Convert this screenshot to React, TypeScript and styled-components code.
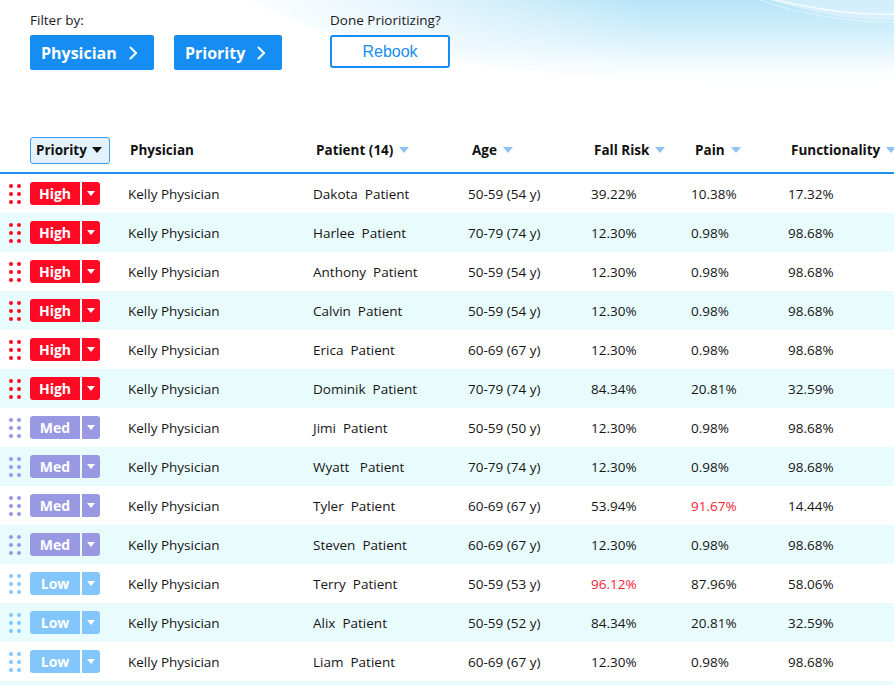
import React from "react";
import styled, { createGlobalStyle, css } from "styled-components";

const Global = createGlobalStyle`
  html, body { margin: 0; padding: 0; background: #fff; }
  body { font-family: "Open Sans", "Noto Sans", sans-serif; color: #111; }
  #root { width: 894px; height: 685px; overflow: hidden; }
`;

const Page = styled.div`
  position: relative;
  width: 894px;
  height: 685px;
  overflow: hidden;
  background: #fff;
`;

const Backdrop = styled.svg`
  position: absolute;
  left: 0;
  top: 0;
  width: 894px;
  height: 130px;
  pointer-events: none;
`;

const TopBar = styled.div`
  position: relative;
  height: 128px;
  box-sizing: border-box;
  padding: 11px 0 0 30px;
  display: flex;
  gap: 48px;
`;

const Group = styled.div`
  display: flex;
  flex-direction: column;
  gap: 6px;
`;

const Label = styled.div`
  font-size: 13.5px;
  line-height: 18px;
  color: #1a1a1a;
`;

const Buttons = styled.div`
  display: flex;
  gap: 20px;
`;

const FilterButton = styled.button<{ $w: number }>`
  width: ${(p) => p.$w}px;
  height: 35px;
  box-sizing: border-box;
  border: none;
  border-radius: 2px;
  background: #168df2;
  color: #fff;
  font-family: "Open Sans", sans-serif;
  font-weight: 700;
  font-size: 16px;
  display: flex;
  align-items: center;
  gap: 12px;
  padding: 0 0 0 11px;
  cursor: pointer;
`;

const RebookButton = styled.button`
  width: 120px;
  height: 33px;
  box-sizing: border-box;
  border: 2px solid #168df2;
  border-radius: 3px;
  background: #fff;
  color: #168df2;
  font-family: "Liberation Sans", Arial, sans-serif;
  font-size: 16px;
  padding: 0;
`;

const Chevron = () => (
  <svg width="9" height="14" viewBox="0 0 9 14">
    <path d="M1.5 1.5 L7 7 L1.5 12.5" fill="none" stroke="#fff" strokeWidth="2" strokeLinecap="round" />
  </svg>
);

const COLS = "30px 98px 185px 155px 123px 100px 97px 1fr";

const HeaderRow = styled.div`
  display: grid;
  grid-template-columns: ${COLS};
  height: 44px;
  align-items: center;
  border-bottom: 2px solid #1f8ff0;
`;

const HeadCell = styled.div<{ $pl?: number }>`
  font-weight: 700;
  font-size: 13.5px;
  color: #111;
  padding-left: ${(p) => p.$pl ?? 3}px;
  display: flex;
  align-items: center;
  gap: 6px;
  white-space: nowrap;
`;

const SortBox = styled.div`
  width: 80px;
  height: 27px;
  box-sizing: border-box;
  border: 1px solid #3a9af0;
  border-radius: 3px;
  background: #e4f2fc;
  display: flex;
  align-items: center;
  padding-left: 5px;
  gap: 5px;
  font-weight: 700;
  font-size: 13.5px;
`;

const Tri = ({ color }: { color: string }) => (
  <svg width="10" height="6" viewBox="0 0 10 6">
    <path d="M0 0 H10 L5 6 Z" fill={color} />
  </svg>
);

const Row = styled.div<{ $alt: boolean }>`
  display: grid;
  grid-template-columns: ${COLS};
  height: 39px;
  align-items: center;
  background: ${(p) => (p.$alt ? "#e9fcfd" : "#fff")};
`;

const Cell = styled.div<{ $red?: boolean }>`
  font-size: 13.5px;
  color: ${(p) => (p.$red ? "#ff1a33" : "#151515")};
  white-space: pre;
`;

type Level = "High" | "Med" | "Low";
const levelColor: Record<Level, string> = {
  High: "#ff0a25",
  Med: "#9999e3",
  Low: "#82c6fb",
};

const Handle = styled.div<{ $c: string }>`
  display: grid;
  grid-template-columns: 4px 4px;
  gap: 4px 4px;
  padding-left: 9px;
  span {
    width: 4px;
    height: 4px;
    border-radius: 50%;
    background: ${(p) => p.$c};
  }
`;

const Badge = styled.div`
  display: flex;
  gap: 2px;
  height: 23px;
`;

const badgeBase = css<{ $c: string }>`
  background: ${(p) => p.$c};
  color: #fff;
  display: flex;
  align-items: center;
  justify-content: center;
`;

const BadgeLabel = styled.div<{ $c: string }>`
  ${badgeBase};
  width: 50px;
  border-radius: 3px 0 0 3px;
  font-weight: 700;
  font-size: 14px;
`;

const BadgeArrow = styled.div<{ $c: string }>`
  ${badgeBase};
  width: 18px;
  border-radius: 0 3px 3px 0;
`;

type Patient = {
  level: Level;
  name: string;
  age: string;
  fall: string;
  pain: string;
  func: string;
  redFall?: boolean;
  redPain?: boolean;
};

const rows: Patient[] = [
  { level: "High", name: "Dakota  Patient", age: "50-59 (54 y)", fall: "39.22%", pain: "10.38%", func: "17.32%" },
  { level: "High", name: "Harlee  Patient", age: "70-79 (74 y)", fall: "12.30%", pain: "0.98%", func: "98.68%" },
  { level: "High", name: "Anthony  Patient", age: "50-59 (54 y)", fall: "12.30%", pain: "0.98%", func: "98.68%" },
  { level: "High", name: "Calvin  Patient", age: "50-59 (54 y)", fall: "12.30%", pain: "0.98%", func: "98.68%" },
  { level: "High", name: "Erica  Patient", age: "60-69 (67 y)", fall: "12.30%", pain: "0.98%", func: "98.68%" },
  { level: "High", name: "Dominik  Patient", age: "70-79 (74 y)", fall: "84.34%", pain: "20.81%", func: "32.59%" },
  { level: "Med", name: "Jimi  Patient", age: "50-59 (50 y)", fall: "12.30%", pain: "0.98%", func: "98.68%" },
  { level: "Med", name: "Wyatt   Patient", age: "70-79 (74 y)", fall: "12.30%", pain: "0.98%", func: "98.68%" },
  { level: "Med", name: "Tyler  Patient", age: "60-69 (67 y)", fall: "53.94%", pain: "91.67%", func: "14.44%", redPain: true },
  { level: "Med", name: "Steven  Patient", age: "60-69 (67 y)", fall: "12.30%", pain: "0.98%", func: "98.68%" },
  { level: "Low", name: "Terry  Patient", age: "50-59 (53 y)", fall: "96.12%", pain: "87.96%", func: "58.06%", redFall: true },
  { level: "Low", name: "Alix  Patient", age: "50-59 (52 y)", fall: "84.34%", pain: "20.81%", func: "32.59%" },
  { level: "Low", name: "Liam  Patient", age: "60-69 (67 y)", fall: "12.30%", pain: "0.98%", func: "98.68%" },
];

const SORT = "#8fc3f2";

export default function App() {
  return (
    <Page>
      <Global />
      <Backdrop viewBox="0 0 894 130" preserveAspectRatio="none">
        <defs>
          <linearGradient id="sky" x1="0" y1="0" x2="0" y2="1">
            <stop offset="0" stopColor="#b6e4f8" />
            <stop offset="0.55" stopColor="#e2f5fd" />
            <stop offset="1" stopColor="#ffffff" stopOpacity="0" />
          </linearGradient>
          <linearGradient id="fadeL" x1="0" y1="0" x2="1" y2="0">
            <stop offset="0" stopColor="#fff" stopOpacity="1" />
            <stop offset="0.45" stopColor="#fff" stopOpacity="0.6" />
            <stop offset="1" stopColor="#fff" stopOpacity="0" />
          </linearGradient>
        </defs>
        <path d="M250 0 H894 V90 C760 92 560 80 420 55 C340 40 290 20 250 0 Z" fill="url(#sky)" />
        <rect x="230" y="0" width="420" height="100" fill="url(#fadeL)" />
        <path d="M770 0 C820 15 850 20 894 20 V0 Z" fill="#ffffff" opacity="0.35" />
        <path d="M775 0 C830 12 860 15 894 14" fill="none" stroke="#ffffff" strokeWidth="1.5" opacity="0.8" />
        <path d="M760 0 C800 14 845 22 894 22" fill="none" stroke="#ffffff" strokeWidth="1" opacity="0.5" />
      </Backdrop>

      <TopBar>
        <Group>
          <Label>Filter by:</Label>
          <Buttons>
            <FilterButton $w={124}>
              Physician <Chevron />
            </FilterButton>
            <FilterButton $w={108}>
              Priority <Chevron />
            </FilterButton>
          </Buttons>
        </Group>
        <Group>
          <Label>Done Prioritizing?</Label>
          <RebookButton>Rebook</RebookButton>
        </Group>
      </TopBar>

      <HeaderRow>
        <div />
        <HeadCell $pl={0}>
          <SortBox>
            Priority <Tri color="#111" />
          </SortBox>
        </HeadCell>
        <HeadCell $pl={2}>Physician</HeadCell>
        <HeadCell>
          Patient (14) <Tri color={SORT} />
        </HeadCell>
        <HeadCell $pl={4}>
          Age <Tri color={SORT} />
        </HeadCell>
        <HeadCell>
          Fall Risk <Tri color={SORT} />
        </HeadCell>
        <HeadCell $pl={4}>
          Pain <Tri color={SORT} />
        </HeadCell>
        <HeadCell>
          Functionality <Tri color={SORT} />
        </HeadCell>
      </HeaderRow>

      {rows.map((r, i) => {
        const c = levelColor[r.level];
        return (
          <Row key={i} $alt={i % 2 === 1}>
            <Handle $c={c}>
              {Array.from({ length: 6 }).map((_, k) => (
                <span key={k} />
              ))}
            </Handle>
            <Badge>
              <BadgeLabel $c={c}>{r.level}</BadgeLabel>
              <BadgeArrow $c={c}>
                <svg width="8" height="5" viewBox="0 0 8 5">
                  <path d="M0 0 H8 L4 5 Z" fill="#fff" />
                </svg>
              </BadgeArrow>
            </Badge>
            <Cell>Kelly Physician</Cell>
            <Cell>{r.name}</Cell>
            <Cell>{r.age}</Cell>
            <Cell $red={r.redFall}>{r.fall}</Cell>
            <Cell $red={r.redPain}>{r.pain}</Cell>
            <Cell>{r.func}</Cell>
          </Row>
        );
      })}
      <Row $alt={true} />
    </Page>
  );
}
